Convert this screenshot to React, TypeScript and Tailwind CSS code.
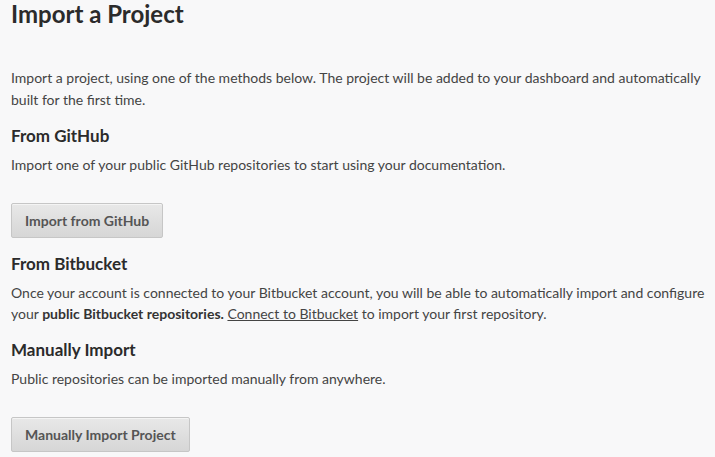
import React from 'react';

const Section: React.FC<{ title: string; children: React.ReactNode }> = ({ title, children }) => (
    <div>
        <h2 className="text-[17px] font-bold leading-[22px] text-[#2b2b2b] mb-[7px]">{title}</h2>
        {children}
    </div>
);

const GrayButton: React.FC<{ label: string }> = ({ label }) => (
    <button className="h-[35px] px-[13px] text-[14px] font-bold text-[#555] border border-[#c6c6c6] rounded-[2px] bg-gradient-to-b from-[#e8e8e8] to-[#d6d6d6] shadow-[inset_0_1px_0_#f4f4f4]">
        {label}
    </button>
);

const App: React.FC = () => {
    return (
        <div className="min-h-[457px] bg-[#f8f8f9] pl-[11px] text-[14px] leading-[22px] text-[#444] font-['Lato','Open_Sans',sans-serif]">
            {/* Header */}
            <h1 className="text-[24px] font-bold leading-[28px] text-[#2b2b2b]">Import a Project</h1>

            <p className="mt-[39px] mb-[14px] pr-[11px]">
                Import a project, using one of the methods below. The project will be added to your dashboard and automatically built for the first time.
            </p>

            <Section title="From GitHub">
                <p>Import one of your public GitHub repositories to start using your documentation.</p>
                <div className="mt-[27px] mb-[15px]">
                    <GrayButton label="Import from GitHub" />
                </div>
            </Section>

            <Section title="From Bitbucket">
                <p className="leading-[21px]">
                    Once your account is connected to your Bitbucket account, you will be able to automatically import and configure your{' '}
                    <strong className="text-[#333]">public Bitbucket repositories.</strong>{' '}
                    <a className="underline text-[#444]">Connect to Bitbucket</a> to import your first repository.
                </p>
            </Section>

            <div className="mt-[15px]">
                <Section title="Manually Import">
                    <p>Public repositories can be imported manually from anywhere.</p>
                    <div className="mt-[27px]">
                        <GrayButton label="Manually Import Project" />
                    </div>
                </Section>
            </div>
        </div>
    );
};

export default App;
